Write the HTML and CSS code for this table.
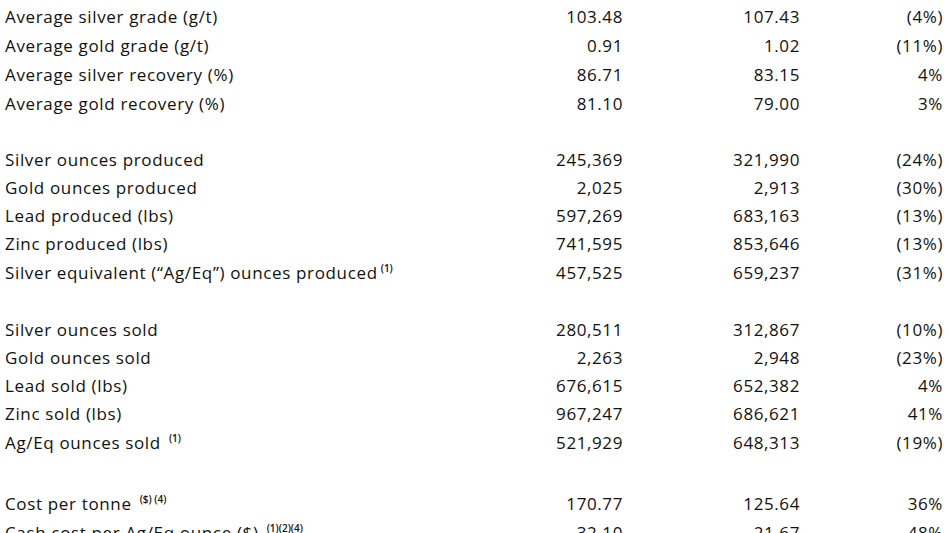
FILE: index.html
```html
<!DOCTYPE html>
<html>
<head>
<meta charset="utf-8">
<link rel="stylesheet" href="styles.css">
</head>
<body>
<div class="sheet">
  <div class="row r29"><div class="lbl">Average silver grade (g/t)</div><div class="num">103.48</div><div class="num">107.43</div><div class="num">(4%)</div></div>
  <div class="row r29"><div class="lbl">Average gold grade (g/t)</div><div class="num">0.91</div><div class="num">1.02</div><div class="num">(11%)</div></div>
  <div class="row r29"><div class="lbl">Average silver recovery (%)</div><div class="num">86.71</div><div class="num">83.15</div><div class="num">4%</div></div>
  <div class="row r29"><div class="lbl">Average gold recovery (%)</div><div class="num">81.10</div><div class="num">79.00</div><div class="num">3%</div></div>
  <div class="gap g1"></div>
  <div class="row r28"><div class="lbl">Silver ounces produced</div><div class="num">245,369</div><div class="num">321,990</div><div class="num">(24%)</div></div>
  <div class="row r28"><div class="lbl">Gold ounces produced</div><div class="num">2,025</div><div class="num">2,913</div><div class="num">(30%)</div></div>
  <div class="row r28"><div class="lbl">Lead produced (lbs)</div><div class="num">597,269</div><div class="num">683,163</div><div class="num">(13%)</div></div>
  <div class="row r28"><div class="lbl">Zinc produced (lbs)</div><div class="num">741,595</div><div class="num">853,646</div><div class="num">(13%)</div></div>
  <div class="row r30"><div class="lbl">Silver equivalent (“Ag/Eq”) ounces produced<sup>(1)</sup></div><div class="num">457,525</div><div class="num">659,237</div><div class="num">(31%)</div></div>
  <div class="gap g2"></div>
  <div class="row r28"><div class="lbl">Silver ounces sold</div><div class="num">280,511</div><div class="num">312,867</div><div class="num">(10%)</div></div>
  <div class="row r28"><div class="lbl">Gold ounces sold</div><div class="num">2,263</div><div class="num">2,948</div><div class="num">(23%)</div></div>
  <div class="row r28"><div class="lbl">Lead sold (lbs)</div><div class="num">676,615</div><div class="num">652,382</div><div class="num">4%</div></div>
  <div class="row r28"><div class="lbl">Zinc sold (lbs)</div><div class="num">967,247</div><div class="num">686,621</div><div class="num">41%</div></div>
  <div class="row r30"><div class="lbl">Ag/Eq ounces sold <sup>(1)</sup></div><div class="num">521,929</div><div class="num">648,313</div><div class="num">(19%)</div></div>
  <div class="gap g3"></div>
  <div class="row r29"><div class="lbl">Cost per tonne <sup>($) (4)</sup></div><div class="num">170.77</div><div class="num">125.64</div><div class="num">36%</div></div>
  <div class="row r29"><div class="lbl">Cash cost per Ag/Eq ounce ($) <sup>(1)(2)(4)</sup></div><div class="num">32.10</div><div class="num">21.67</div><div class="num">48%</div></div>
</div>
</body>
</html>
```
FILE: styles.css
```css
html, body {
  margin: 0;
  padding: 0;
  background: #ffffff;
  overflow: hidden;
}
body {
  font-family: "Open Sans", "Noto Sans", sans-serif;
  font-size: 17px;
  color: #111111;
}
.sheet {
  padding: 2px 0 0 5px;
  display: flex;
  flex-direction: column;
}
.row {
  display: grid;
  grid-template-columns: 495px 123px 177px 143px;
  align-items: center;
  white-space: nowrap;
}
.lbl {
  letter-spacing: 0.65px;
}
.num {
  text-align: right;
  letter-spacing: 0.6px;
}
.r28 { height: 28px; }
.r29 { height: 29px; }
.r30 { height: 30px; }
.g1 { height: 27px; }
.g2 { height: 28px; }
.g3 { height: 32px; }
sup {
  font-size: 10px;
  font-weight: 600;
  vertical-align: 7px;
  line-height: 0;
  letter-spacing: 0;
  margin-left: 3px;
}
```
